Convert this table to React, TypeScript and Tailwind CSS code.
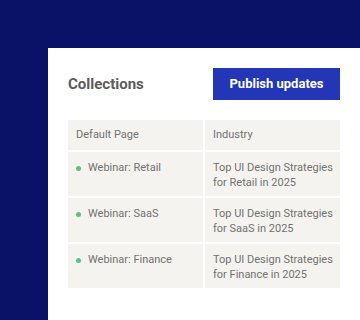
import { Fragment } from "react";

const rows = [
  { page: "Webinar: Retail", industry: "Top UI Design Strategies for Retail in 2025" },
  { page: "Webinar: SaaS", industry: "Top UI Design Strategies for SaaS in 2025" },
  { page: "Webinar: Finance", industry: "Top UI Design Strategies for Finance in 2025" },
];

export default function App() {
  return (
    <div
      className="w-[360px] h-[320px] overflow-hidden bg-[#0a1268] pl-12 pt-12"
      style={{ fontFamily: "Roboto, 'Noto Sans', sans-serif" }}
    >
      <div className="h-full bg-white px-5 pt-5">
        {/* Header */}
        <div className="flex items-center justify-between">
          <h1 className="text-[15px] font-bold text-[#5c5c5c]">Collections</h1>
          <button className="h-8 w-[127px] bg-[#2236b6] text-[13px] font-bold text-white">
            Publish updates
          </button>
        </div>

        {/* Table */}
        <div className="mt-5 grid grid-cols-2 gap-[2px] text-[11px] text-[#727272]">
          <div className="h-[30px] bg-[#f4f3ef] pl-2 flex items-center">Default Page</div>
          <div className="h-[30px] bg-[#f4f3ef] pl-2 flex items-center">Industry</div>
          {rows.map((row) => (
            <Fragment key={row.page}>
              <div className="h-[44px] bg-[#f4f3ef] pl-2 pt-2 flex items-start gap-[7px]">
                <span className="mt-[6px] w-[5px] h-[5px] rounded-full bg-[#5cc185] shrink-0" />
                <span className="leading-[15px]">{row.page}</span>
              </div>
              <div className="h-[44px] bg-[#f4f3ef] pl-2 pt-2 leading-[15px]">
                {row.industry}
              </div>
            </Fragment>
          ))}
        </div>
      </div>
    </div>
  );
}
